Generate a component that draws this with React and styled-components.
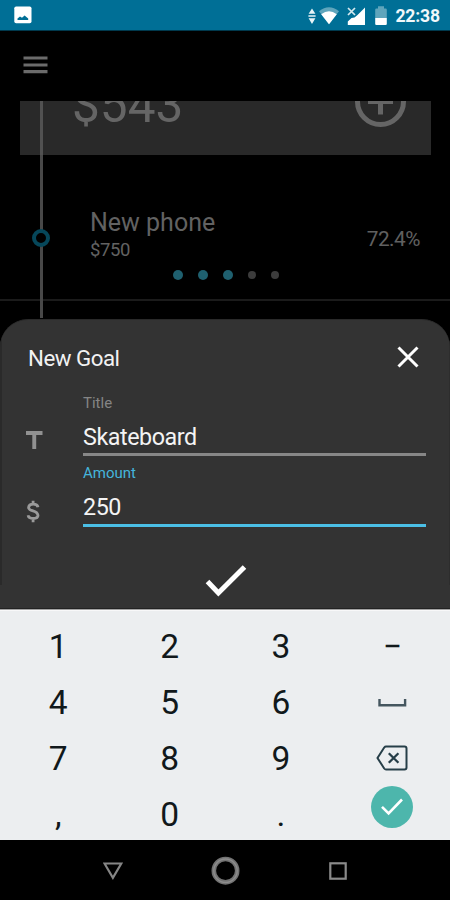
import { useState } from "react";
import styled, { createGlobalStyle } from "styled-components";

const GlobalStyle = createGlobalStyle`
  * {
    box-sizing: border-box;
  }
  body {
    margin: 0;
    background: #000;
    font-family: Roboto, "Liberation Sans", sans-serif;
  }
  button, input {
    font-family: inherit;
  }
  svg {
    display: block;
    flex-shrink: 0;
  }
`;

const Screen = styled.div`
  width: 450px;
  height: 900px;
  display: flex;
  flex-direction: column;
  overflow: hidden;
  background: #000;
`;

/* Status bar */
const StatusBar = styled.header`
  display: flex;
  align-items: center;
  justify-content: space-between;
  height: 31px;
  flex-shrink: 0;
  padding: 0 10px 0 14px;
  background: #006f96;
  border-bottom: 1px solid #00394d;
`;

const StatusIcons = styled.div`
  display: flex;
  align-items: center;
  gap: 8.5px;
  padding-top: 1px;
`;

const WifiGroup = styled.div`
  display: flex;
  align-items: center;
  gap: 3px;
`;

const Clock = styled.span`
  padding-top: 1px;
  color: #f1f8fa;
  font-size: 17.6px;
  line-height: 20px;
  font-weight: 700;
  letter-spacing: -0.15px;
`;

/* App bar */
const AppBar = styled.nav`
  display: flex;
  align-items: center;
  height: 68px;
  flex-shrink: 0;
  margin-bottom: 2px;
  padding: 0 23px;
`;

const IconButton = styled.button`
  display: flex;
  padding: 0;
  border: none;
  background: none;
  cursor: pointer;
`;

/* Timeline */
const Timeline = styled.main`
  height: 218px;
  flex-shrink: 0;
  overflow: hidden;
`;

const Rail = styled.div`
  position: relative;
  width: 3px;
  align-self: stretch;
  flex-shrink: 0;
  margin-top: ${({ $overlap }) => ($overlap ? "-2px" : "0")};
  background: ${({ $light }) => ($light ? "#515151" : "#484848")};
`;

const Marker = styled.span`
  /* Sits on top of the rail */
  position: absolute;
  top: 74px;
  left: -8px;
  width: 18px;
  height: 18px;
  border: 4px solid #06475a;
  border-radius: 50%;
  background: #000;
`;

const BalanceCard = styled.section`
  display: flex;
  align-items: center;
  height: 107px;
  margin: -53px 19px 0 20px;
  padding: 0 25px 0 20px;
  background: #292929;
`;

const Balance = styled.div`
  flex: 1;
  padding: 6px 0 0 29px;
  color: #656565;
  font-size: 49.5px;
  line-height: 58px;
`;

const GoalRow = styled.section`
  display: flex;
  height: 144px;
  padding: 0 30px 0 40px;
`;

const GoalBody = styled.div`
  flex: 1;
  display: flex;
  flex-direction: column;
  padding: 52px 0 0 47px;
`;

const GoalInfo = styled.div`
  display: flex;
  justify-content: space-between;
`;

const GoalName = styled.div`
  color: #626262;
  font-size: 25px;
  line-height: 32px;
`;

const GoalPrice = styled.div`
  color: #626262;
  font-size: 18.5px;
  line-height: 22px;
  letter-spacing: -0.4px;
`;

const GoalPercent = styled.div`
  padding-top: 19px;
  color: #606060;
  font-size: 20.8px;
  line-height: 26px;
  letter-spacing: -0.5px;
`;

const Dots = styled.div`
  display: flex;
  align-items: center;
  gap: 15px;
  padding: 9px 0 0 83px;
`;

const Dot = styled.span`
  width: ${({ $active }) => ($active ? "10px" : "8px")};
  height: ${({ $active }) => ($active ? "10px" : "8px")};
  flex-shrink: 0;
  border-radius: 50%;
  background: ${({ $active }) => ($active ? "#1f606f" : "#3c3c3c")};
`;

const NextRow = styled.section`
  display: flex;
  height: 19px;
  padding-left: 40px;
  border-top: 2px solid #1b1b1b;
`;

/* Bottom sheet */
const Sheet = styled.form`
  height: 290px;
  flex-shrink: 0;
  padding: 0 24px 0 26px;
  border-top: 1px solid #2a2a2a;
  border-bottom: 1px solid #222;
  border-radius: 28px 28px 0 0;
  background:
    linear-gradient(#2a2a2a, #2a2a2a) left top / 2px 265px no-repeat,
    linear-gradient(#2d2d2d, #2d2d2d) right top / 1px 265px no-repeat,
    #333;
`;

const SheetHeader = styled.div`
  display: flex;
  align-items: center;
  justify-content: space-between;
  height: 74px;
  padding: 0 7px 0 2px;
`;

const SheetTitle = styled.h2`
  margin: 0;
  padding-top: 1px;
  color: #f2f2f2;
  font-size: 22.3px;
  line-height: 26px;
  font-weight: 400;
  letter-spacing: -0.5px;
`;

const Field = styled.label`
  display: grid;
  grid-template-columns: 57px 1fr;
  height: ${({ $active }) => ($active ? "71px" : "62px")};
`;

const FieldIcon = styled.span`
  align-self: end;
  padding-bottom: ${({ $active }) => ($active ? "4px" : "7px")};
`;

const FieldBody = styled.span`
  display: flex;
  flex-direction: column;
  justify-content: flex-end;
`;

const FieldLabel = styled.span`
  color: ${({ $active }) => ($active ? "#45b5dc" : "#858585")};
  font-size: 15px;
  line-height: 18px;
`;

const FieldInput = styled.input`
  width: 100%;
  height: ${({ $active }) => ($active ? "45px" : "44px")};
  padding: ${({ $active }) => ($active ? "8px 0 0" : "9px 0 0")};
  border: none;
  border-bottom: 3px solid ${({ $active }) => ($active ? "#4bbfe6" : "#878787")};
  border-radius: 0;
  outline: none;
  background: transparent;
  color: #f4f4f4;
  font-size: 23.3px;
  line-height: 28px;
  letter-spacing: -0.45px;
`;

const SubmitRow = styled.div`
  display: flex;
  justify-content: center;
  padding-top: 37px;
`;

/* Number pad */
const Keypad = styled.section`
  display: grid;
  grid-template-columns: repeat(4, 111.4px);
  grid-auto-rows: 55.9px;
  height: 231px;
  flex-shrink: 0;
  padding: 9px 0 0 2px;
  overflow: hidden;
  border-top: 1px solid #a3a3a3;
  background: #eceef0;
  box-shadow: inset 0 1px 0 #f8f8f9;
`;

const Key = styled.button`
  display: flex;
  align-items: center;
  justify-content: center;
  padding: ${({ $raised }) => ($raised ? "0 0 16px 1px" : "0 0 0 1px")};
  border: none;
  background: none;
  color: #11181b;
  font-size: 33.5px;
  line-height: 40px;
  cursor: pointer;
`;

const DoneCircle = styled.span`
  display: flex;
  align-items: center;
  justify-content: center;
  width: 42px;
  height: 42px;
  flex-shrink: 0;
  border-radius: 50%;
  background: #4db6ac;
`;

/* System navigation */
const NavBar = styled.footer`
  display: flex;
  align-items: center;
  justify-content: space-between;
  flex: 1;
  padding: 1px 103px 0;
  background: #000;
`;

const PictureIcon = () => (
  <svg width="18" height="18" viewBox="0 0 18 18">
    <rect x="0.3" y="0.5" width="17.2" height="16.8" rx="1.8" fill="#fff" />
    <path d="M3.500 14v-1.600l2.500-1.800 2 1.200L10.600 9.500l3.600 3V14z" fill="#006f96" />
  </svg>
);

const DataIcon = () => (
  <svg width="8" height="18" viewBox="0 0 8 18">
    <path d="M4 1.500l3.400 5.200H.6zM4 17L.6 11.300h6.800zM.4 8.300h7.200v1.400H.4z" fill="#e8f4f7" />
  </svg>
);

const WifiIcon = () => (
  <svg width="20" height="20" viewBox="0 0 20 20">
    <path d="M0 5.200Q10-2.800 20 5.200L10 18.300z" fill="#5fa5bc" />
    <path d="M2.200 8.200Q10 2.200 17.800 8.200L10 18.300z" fill="#fff" />
  </svg>
);

const SignalIcon = () => (
  <svg width="19" height="20" viewBox="0 0 19 20">
    <path d="M18 1.500v17.500H.8v-3.500L4.500 12l3-.5L10.500 9z" fill="#fff" />
    <path d="M1 2l7 7M8 2L1 9" stroke="#d5e9ef" strokeWidth="1.7" />
  </svg>
);

const BatteryIcon = () => (
  <svg width="12" height="20" viewBox="0 0 12 20">
    <path d="M3 .3h6v2.200h1.600q1.200 0 1.200 1.200V12H.2V3.700q0-1.200 1.200-1.200H3z" fill="#5fa5bc" />
    <path d="M.2 12h11.600v6q0 1-1.200 1H1.400Q.2 19 .2 18z" fill="#fff" />
  </svg>
);

const MenuIcon = () => (
  <svg width="25" height="18" viewBox="0 0 25 18">
    <path d="M.5 2h24M.5 9h24M.5 15.700h24" stroke="#6b6b6b" strokeWidth="3.2" />
  </svg>
);

const AddIcon = () => (
  <svg width="51" height="51" viewBox="0 0 51 51">
    <circle cx="25.5" cy="25.5" r="23" fill="none" stroke="#656565" strokeWidth="5" />
    <path d="M13 25.500h25M25.500 13v25.500" stroke="#656565" strokeWidth="5" />
  </svg>
);

const CloseIcon = () => (
  <svg width="22" height="22" viewBox="0 0 22 22">
    <path d="M1.500 1.500l19 19M20.500 1.500l-19 19" stroke="#fff" strokeWidth="3" />
  </svg>
);

const TitleIcon = () => (
  <svg width="17" height="18" viewBox="0 0 17 18">
    <path d="M0 0h16.500v4H10.200v14H6.300V4H0z" fill="#919191" />
  </svg>
);

const DollarIcon = () => (
  <svg width="14" height="23" viewBox="0 0 14 23">
    <path
      d="M12 7.200Q11.400 4.200 7.200 4.200T2.600 7.400Q2.600 9.700 7 10.900T12 15.300Q12 18.500 7.300 18.500 2.600 18.500 2.100 15.300M7.100 4.500V.8M7.100 18.500v3.700"
      fill="none"
      stroke="#9a9a9a"
      strokeWidth="2.8"
    />
  </svg>
);

const CheckIcon = () => (
  <svg width="42" height="34" viewBox="0 0 42 34">
    <path d="M2.500 17.500L13.400 29 39.500 3" fill="none" stroke="#fff" strokeWidth="5" />
  </svg>
);

const SpaceIcon = () => (
  <svg width="29" height="8" viewBox="0 0 29 8">
    <path d="M1.500 0v6.300h25.600V0" fill="none" stroke="#45565f" strokeWidth="2.4" />
  </svg>
);

const BackspaceIcon = () => (
  <svg width="32" height="28" viewBox="0 0 32 28">
    <path
      d="M10 1.500h18.500q2 0 2 2v19q0 2-2 2H10q-1 0-1.800-1L1.500 13 8.200 2.500q.8-1 1.800-1z"
      fill="none"
      stroke="#263e48"
      strokeWidth="2"
    />
    <path d="M12.800 8.200l9.600 9.600M22.400 8.200l-9.600 9.600" stroke="#263e48" strokeWidth="2.3" />
  </svg>
);

const DoneIcon = () => (
  <svg width="24" height="19" viewBox="0 0 24 19">
    <path d="M2 9.800l6.600 6.700L22 2.500" fill="none" stroke="#fff" strokeWidth="2.6" />
  </svg>
);

const BackIcon = () => (
  <svg width="20" height="18" viewBox="0 0 20 18">
    <path d="M1.500 1.500h16.800L9.900 15.800z" fill="none" stroke="#858585" strokeWidth="2.2" />
  </svg>
);

const HomeIcon = () => (
  <svg width="30" height="30" viewBox="0 0 30 30">
    <circle cx="14.5" cy="14.7" r="11.7" fill="none" stroke="#737373" strokeWidth="4.6" />
    <circle cx="14.5" cy="14.7" r="11.7" fill="none" stroke="#8d8d8d" strokeWidth="1.4" />
  </svg>
);

const RecentIcon = () => (
  <svg width="18" height="18" viewBox="0 0 18 18">
    <rect x="1.3" y="1.3" width="15.4" height="15.4" fill="none" stroke="#8a8a8a" strokeWidth="2.2" />
  </svg>
);

const keys = [
  "1", "2", "3", "−",
  "4", "5", "6", "space",
  "7", "8", "9", "backspace",
  ",", "0", ".", "done",
];

const dots = [true, true, true, false, false];

const keyFaces = {
  space: <SpaceIcon />,
  backspace: <BackspaceIcon />,
  done: (
    <DoneCircle>
      <DoneIcon />
    </DoneCircle>
  ),
};

const App = () => {
  const [title, setTitle] = useState("Skateboard");
  const [amount, setAmount] = useState("250");

  const handleKey = (key) => {
    if (key === "backspace") {
      setAmount(amount.slice(0, -1));
    } else if (key === "space") {
      setAmount(amount + " ");
    } else if (key !== "done") {
      setAmount(amount + key);
    }
  };

  return (
    <>
      <GlobalStyle />
      <Screen>
        <StatusBar>
          <PictureIcon />
          <StatusIcons>
            <WifiGroup>
              <DataIcon />
              <WifiIcon />
            </WifiGroup>
            <SignalIcon />
            <BatteryIcon />
            <Clock>22:38</Clock>
          </StatusIcons>
        </StatusBar>

        <AppBar>
          <IconButton>
            <MenuIcon />
          </IconButton>
        </AppBar>

        <Timeline>
          <BalanceCard>
            <Rail $light />
            <Balance>$543</Balance>
            <IconButton>
              <AddIcon />
            </IconButton>
          </BalanceCard>
          <GoalRow>
            <Rail>
              <Marker />
            </Rail>
            <GoalBody>
              <GoalInfo>
                <div>
                  <GoalName>New phone</GoalName>
                  <GoalPrice>$750</GoalPrice>
                </div>
                <GoalPercent>72.4%</GoalPercent>
              </GoalInfo>
              <Dots>
                {dots.map((active, index) => (
                  <Dot key={index} $active={active} />
                ))}
              </Dots>
            </GoalBody>
          </GoalRow>
          <NextRow>
            <Rail $overlap />
          </NextRow>
        </Timeline>

        <Sheet onSubmit={(event) => event.preventDefault()}>
          <SheetHeader>
            <SheetTitle>New Goal</SheetTitle>
            <IconButton type="button">
              <CloseIcon />
            </IconButton>
          </SheetHeader>
          <Field>
            <FieldIcon>
              <TitleIcon />
            </FieldIcon>
            <FieldBody>
              <FieldLabel>Title</FieldLabel>
              <FieldInput value={title} onChange={(event) => setTitle(event.target.value)} />
            </FieldBody>
          </Field>
          <Field $active>
            <FieldIcon $active>
              <DollarIcon />
            </FieldIcon>
            <FieldBody>
              <FieldLabel $active>Amount</FieldLabel>
              <FieldInput
                $active
                value={amount}
                onChange={(event) => setAmount(event.target.value)}
              />
            </FieldBody>
          </Field>
          <SubmitRow>
            <IconButton type="submit">
              <CheckIcon />
            </IconButton>
          </SubmitRow>
        </Sheet>

        <Keypad>
          {keys.map((key) => (
            <Key key={key} $raised={key === "done"} onClick={() => handleKey(key)}>
              {keyFaces[key] || key}
            </Key>
          ))}
        </Keypad>

        <NavBar>
          <BackIcon />
          <HomeIcon />
          <RecentIcon />
        </NavBar>
      </Screen>
    </>
  );
};

export default App;
